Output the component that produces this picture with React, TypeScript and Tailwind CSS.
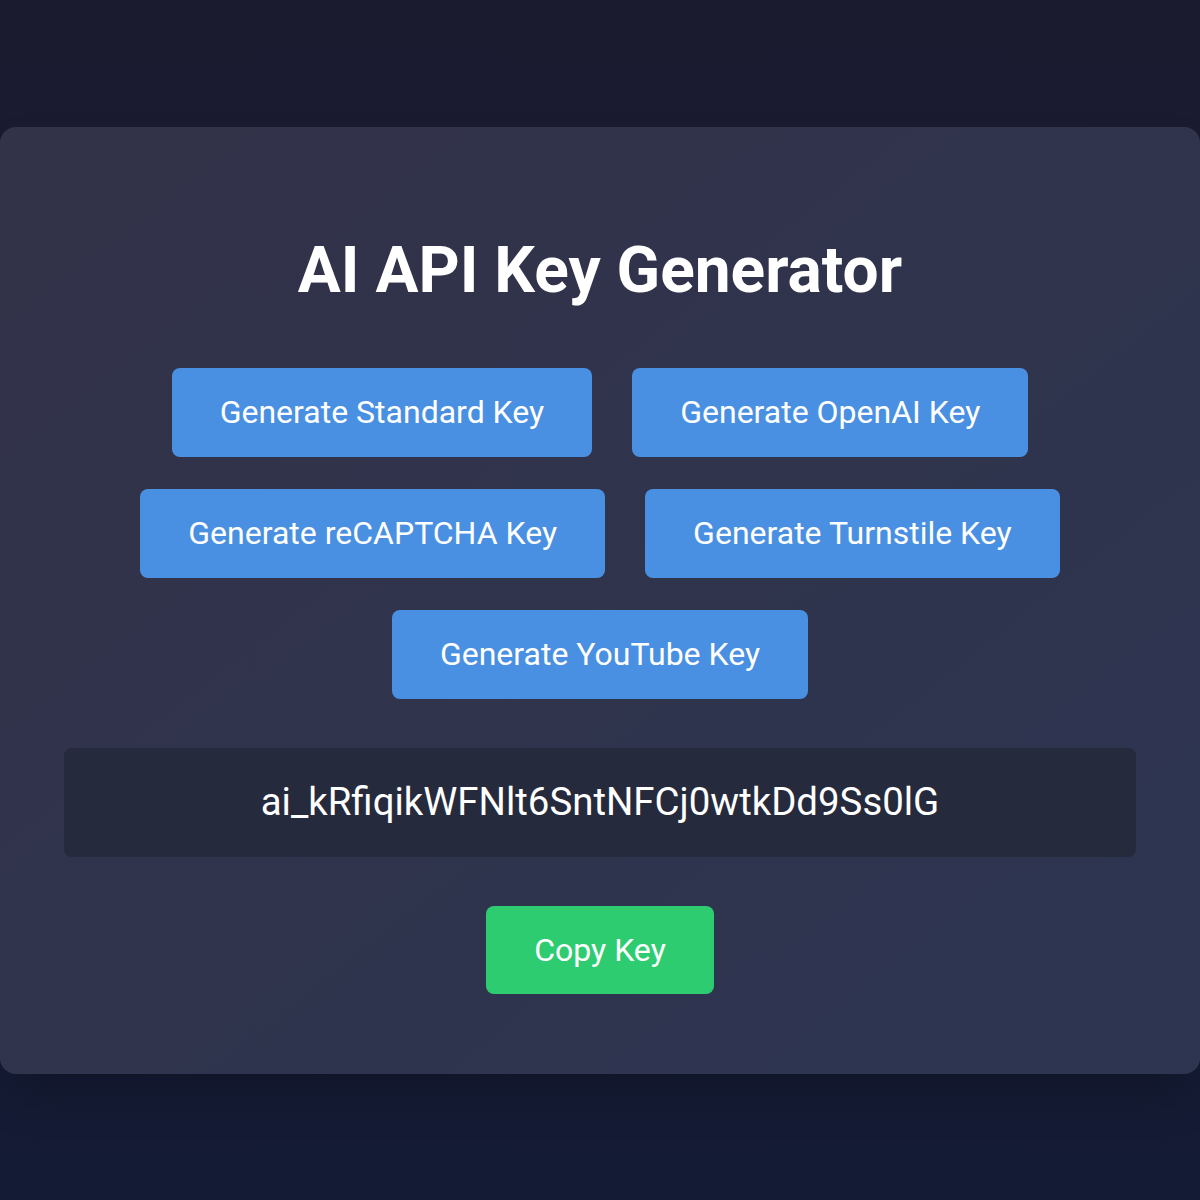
import React, { useState } from 'react';

const KEY_TYPES = ['Standard', 'OpenAI', 'reCAPTCHA', 'Turnstile', 'YouTube'];

export default function App() {
  const [apiKey] = useState('ai_kRfiqikWFNlt6SntNFCj0wtkDd9Ss0lG');

  return (
    <div
      className="min-h-screen flex items-center justify-center bg-gradient-to-b from-[#1b1b30] to-[#141b34]"
      style={{ fontFamily: 'Roboto, "Noto Sans", sans-serif' }}
    >
      <div className="w-full h-[947px] rounded-2xl bg-gradient-to-br from-[#323248] to-[#2d3551] shadow-2xl px-16 pt-[104px] flex flex-col items-center">
        <h1 className="text-[64px] leading-[80px] font-bold text-white">AI API Key Generator</h1>

        {/* Generator buttons */}
        <div className="mt-[57px] flex flex-wrap justify-center gap-x-10 gap-y-8 w-full">
          {KEY_TYPES.map((type) => (
            <button
              key={type}
              className="h-[89px] px-12 rounded-lg bg-[#4a90e2] text-white text-[32px] hover:bg-[#357abd] transition-colors"
            >
              Generate {type} Key
            </button>
          ))}
        </div>

        {/* Output */}
        <div className="mt-[49px] w-full h-[109px] rounded-lg bg-[#262a3d] flex items-center justify-center">
          <span className="text-[38.4px] text-white">{apiKey}</span>
        </div>

        <button className="mt-[49px] h-[88px] px-12 rounded-lg bg-[#2ecc71] text-white text-[32px] hover:bg-[#27ae60] transition-colors">
          Copy Key
        </button>
      </div>
    </div>
  );
}
